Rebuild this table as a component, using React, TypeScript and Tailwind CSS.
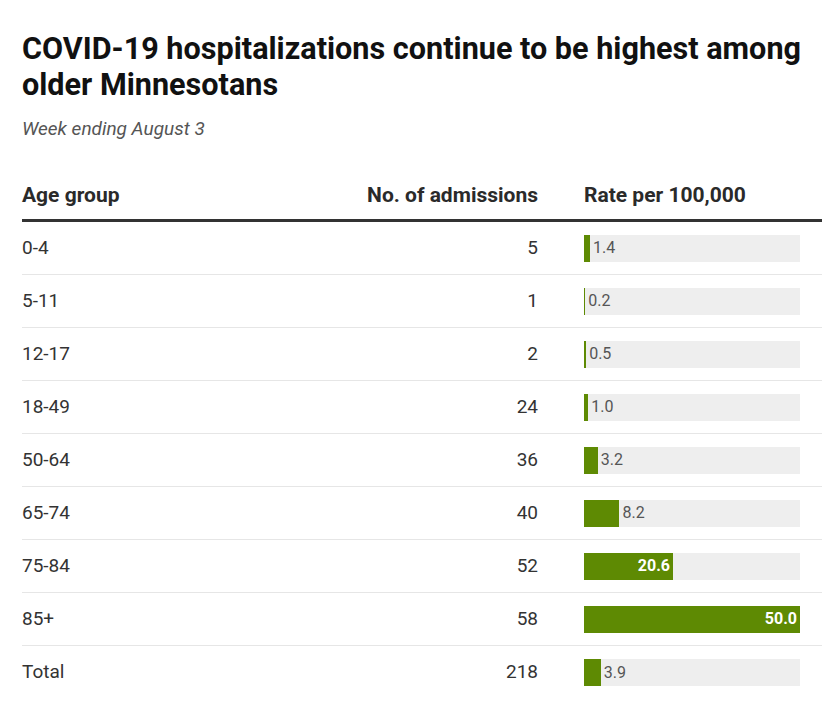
import React from "react";

const rows = [
  { age: "0-4", n: "5", rate: 1.4 },
  { age: "5-11", n: "1", rate: 0.2 },
  { age: "12-17", n: "2", rate: 0.5 },
  { age: "18-49", n: "24", rate: 1.0 },
  { age: "50-64", n: "36", rate: 3.2 },
  { age: "65-74", n: "40", rate: 8.2 },
  { age: "75-84", n: "52", rate: 20.6 },
  { age: "85+", n: "58", rate: 50.0 },
  { age: "Total", n: "218", rate: 3.9 },
];

function Bar({ rate }: { rate: number }) {
  const pct = (rate / 50) * 100;
  const inside = rate >= 15;
  return (
    <div className="relative h-[27px] w-[216px] bg-[#eeeeee] flex items-center">
      <div
        className="h-full bg-[#5e8a03] flex items-center justify-end"
        style={{ width: `${Math.max(pct, 0.6)}%` }}
      >
        {inside && (
          <span className="pr-[3px] text-[16px] font-bold text-white leading-none">
            {rate.toFixed(1)}
          </span>
        )}
      </div>
      {!inside && (
        <span className="pl-[3px] text-[16px] text-[#555555] leading-none">
          {rate.toFixed(1)}
        </span>
      )}
    </div>
  );
}

export default function App() {
  return (
    <div
      className="w-[840px] h-[723px] bg-white pl-[22px] pr-[18px] text-[#333333]"
      style={{ fontFamily: "Roboto, 'Noto Sans', sans-serif" }}
    >
      <h1 className="pt-[31px] text-[30.6px] leading-[36px] font-bold text-[#111111]">
        COVID-19 hospitalizations continue to be highest among older Minnesotans
      </h1>
      <p className="mt-[15px] text-[19px] italic text-[#555555] leading-[22px]">
        Week ending August 3
      </p>
      <div className="mt-[32px]">
        <div className="grid grid-cols-[316px_200px_284px] items-center h-[50px] border-b-[3px] border-[#333333] text-[21px] font-bold text-[#2a2a2a]">
          <div>Age group</div>
          <div className="text-right">No. of admissions</div>
          <div className="pl-[46px]">Rate per 100,000</div>
        </div>
        {rows.map((r, i) => (
          <div
            key={r.age}
            className={`grid grid-cols-[316px_200px_284px] items-center h-[53px] text-[19px] text-[#333333] ${
              i < rows.length - 1 ? "border-b border-[#e6e6e6]" : ""
            }`}
          >
            <div>{r.age}</div>
            <div className="text-right">{r.n}</div>
            <div className="pl-[46px]">
              <Bar rate={r.rate} />
            </div>
          </div>
        ))}
      </div>
    </div>
  );
}
